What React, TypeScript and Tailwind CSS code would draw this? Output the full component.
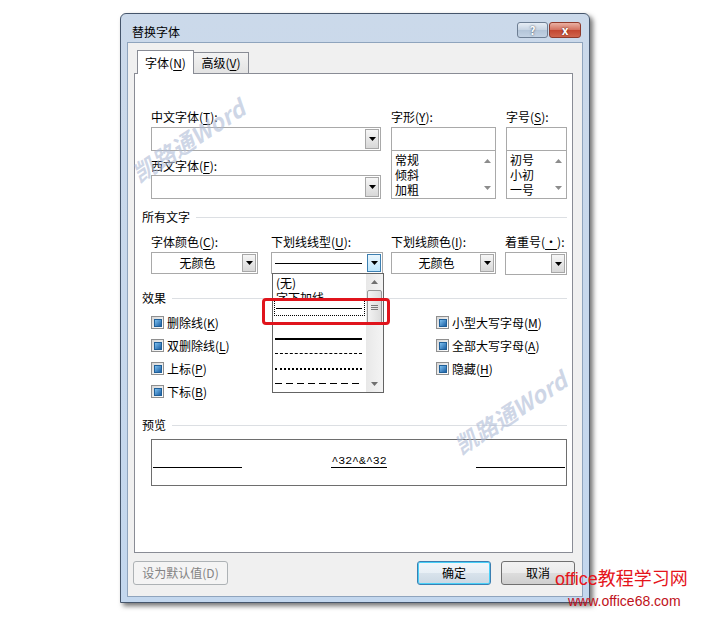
import type { ReactNode } from "react";
import clsx from "clsx";

const Caret = ({ up, className }: { up?: boolean; className?: string }) => (
  <svg width="7" height="4" viewBox="0 0 7 4" className={className}>
    <path d={up ? "M0 4h7L3.5 0z" : "M0 0h7L3.5 4z"} fill="currentColor" />
  </svg>
);

const Acc = ({ text, k, tail = "" }: { text: string; k: string; tail?: string }) => (
  <span>
    {text}(<span className="underline decoration-1 underline-offset-2">{k}</span>){tail}
  </span>
);

type ComboProps = { className?: string; children?: ReactNode; active?: boolean };

const Combo = ({ className, children, active }: ComboProps) => (
  <div className={clsx("flex border border-[#a9a9a9] bg-white p-[1px]", className)}>
    <div className="flex min-w-0 flex-1 items-center">{children}</div>
    <div
      className={clsx(
        "flex w-[14px] items-center justify-center border",
        active
          ? "border-[#3c7fb1] bg-[linear-gradient(#eaf6fd,#bee6fd)]"
          : "border-[#a7a7a7] bg-[linear-gradient(#f6f6f6,#d8d8d8)]",
      )}
    >
      <Caret className="text-black" />
    </div>
  </div>
);

const ListBox = ({ items }: { items: string[] }) => (
  <div className="flex h-[48px] border border-t-0 border-[#a9a9a9] bg-white">
    <div className="flex-1 pl-[3px] pt-[1px] leading-[15px]">
      {items.map((i) => (
        <div key={i}>{i}</div>
      ))}
    </div>
    <div className="flex w-[16px] flex-col items-center justify-between py-[8px] text-[#8c8c8c]">
      <Caret up />
      <Caret />
    </div>
  </div>
);

const Section = ({ title, className }: { title: string; className?: string }) => (
  <div className={clsx("flex h-[16px] items-center gap-[6px]", className)}>
    <span>{title}</span>
    <div className="h-px flex-1 bg-[#dcdfe3]" />
  </div>
);

const Check = ({ children }: { children: ReactNode }) => (
  <div className="flex h-[23px] items-center">
    <div className="flex h-[13px] w-[13px] items-center justify-center border border-[#8f8f8f] bg-[linear-gradient(135deg,#d6d6d6,#ffffff)]">
      <div className="h-[8px] w-[8px] border border-[#1f5f98] bg-[linear-gradient(135deg,#7cc0f0,#1c5fa3)]" />
    </div>
    <span className="ml-[3px]">{children}</span>
  </div>
);

const Button = ({ children, className, primary, disabled }: { children: ReactNode; className?: string; primary?: boolean; disabled?: boolean }) => (
  <div
    className={clsx(
      "flex h-[24px] items-center justify-center rounded-[3px] border",
      disabled
        ? "border-[#adb2b5] bg-[#f4f4f4] text-[#838383]"
        : primary
          ? "border-[#3c7fb1] bg-[linear-gradient(#f2f7fb,#e8eff5_50%,#d9e3ec_50%,#cbd8e3)] shadow-[inset_0_0_0_1px_#48d0f8]"
          : "border-[#707070] bg-[linear-gradient(#f2f2f2,#ebebeb_50%,#dddddd_50%,#cfcfcf)]",
      className,
    )}
  >
    {children}
  </div>
);

const LineItem = ({ line }: { line: string }) => (
  <div className="flex h-[15px] items-center pl-[2px]">
    <div className={clsx("w-[87px]", line)} />
  </div>
);

const Watermark = ({ className }: { className: string }) => (
  <div
    className={clsx(
      "pointer-events-none absolute -translate-x-1/2 -translate-y-1/2 -rotate-[33deg] whitespace-nowrap text-[23px] font-bold italic text-[#aebbd6]/60",
      className,
    )}
  >
    凯路通Word
  </div>
);

export default function App() {
  return (
    <div className="relative h-[617px] w-[710px] overflow-hidden bg-white font-['Noto_Sans_CJK_SC',sans-serif] text-[12px] leading-[16px] text-black">
      <div className="ml-[120px] pt-[13px]">
        {/* window */}
        <div className="flex h-[590px] w-[470px] flex-col rounded-t-[6px] border border-[#45556b] bg-[linear-gradient(180deg,#cbd9ea,#c3d7ee)] shadow-[3px_3px_5px_rgba(0,0,0,0.55)]">
          {/* title bar */}
          <div className="flex h-[28px] items-start pl-[11px] pr-[8px]">
            <span className="mt-[10px]">替换字体</span>
            <div className="ml-auto mt-[8px] flex gap-[1px]">
              <div className="flex h-[16px] w-[31px] items-center justify-center rounded-[3px] border border-[#6d7e93] bg-[linear-gradient(#e6edf5,#c6d3e2_50%,#b2c4d8_50%,#c3d2e3)] text-[11px] font-bold leading-none text-white [text-shadow:0_0_2px_#243447]">
                ?
              </div>
              <div className="flex h-[16px] w-[32px] items-center justify-center rounded-[3px] border border-[#8e3a2c] bg-[linear-gradient(#eab0a2,#d2705e_50%,#c3452f_50%,#d0654c)] text-[12px] font-bold leading-none text-white [text-shadow:0_0_2px_#4a1208]">
                x
              </div>
            </div>
          </div>

          {/* client area */}
          <div className="ml-[6px] flex h-[555px] w-[456px] flex-col border border-[#8fa4bd] bg-[#f0f0f0]">
            {/* tabs */}
            <div className="ml-[9px] mt-[7px] flex h-[23px] items-end">
              <div className="relative z-10 mb-[-1px] flex h-[24px] w-[57px] items-center justify-center border border-b-0 border-[#898c95] bg-white">
                <Acc text="字体" k="N" />
              </div>
              <div className="ml-[-1px] flex h-[21px] w-[56px] items-center justify-center border border-b-0 border-[#898c95] bg-[linear-gradient(#f3f3f3,#e3e3e3)]">
                <Acc text="高级" k="V" />
              </div>
            </div>

            {/* tab panel */}
            <div className="ml-[6px] flex h-[480px] w-[439px] flex-col border border-[#898c95] bg-white pl-[7px] pr-[5px]">
              {/* font pickers */}
              <div className="ml-[9px] mt-[35px] flex">
                <div className="flex w-[230px] flex-col">
                  <Acc text="中文字体" k="T" tail=":" />
                  <Combo className="mt-[2px] h-[24px]" />
                  <div className="mt-[7px]">
                    <Acc text="西文字体" k="F" tail=":" />
                  </div>
                  <Combo className="mt-[1px] h-[24px]" />
                </div>
                <div className="ml-[10px] flex w-[105px] flex-col">
                  <Acc text="字形" k="Y" tail=":" />
                  <div className="mt-[2px] h-[24px] border border-[#a9a9a9] bg-white" />
                  <ListBox items={["常规", "倾斜", "加粗"]} />
                </div>
                <div className="ml-[10px] flex w-[61px] flex-col">
                  <Acc text="字号" k="S" tail=":" />
                  <div className="mt-[2px] h-[24px] border border-[#a9a9a9] bg-white" />
                  <ListBox items={["初号", "小初", "一号"]} />
                </div>
              </div>

              <Section title="所有文字" className="mt-[10px]" />

              <div className="ml-[9px] mt-[9px] flex">
                <div className="flex w-[107px] flex-col">
                  <Acc text="字体颜色" k="C" tail=":" />
                  <Combo className="mt-[2px] h-[22px]">
                    <span className="w-full text-center">无颜色</span>
                  </Combo>
                </div>
                <div className="ml-[13px] flex w-[112px] flex-col">
                  <Acc text="下划线线型" k="U" tail=":" />
                  <Combo className="mt-[2px] h-[22px]" active>
                    <div className="ml-[2px] h-px w-[87px] bg-black" />
                  </Combo>
                </div>
                <div className="ml-[8px] flex w-[105px] flex-col">
                  <Acc text="下划线颜色" k="I" tail=":" />
                  <Combo className="mt-[2px] h-[22px]">
                    <span className="w-full text-center">无颜色</span>
                  </Combo>
                </div>
                <div className="ml-[9px] flex w-[62px] flex-col">
                  <Acc text="着重号" k="·" tail=":" />
                  <Combo className="mt-[2px] h-[23px]" />
                </div>
              </div>

              <Section title="效果" className="mt-[15px]" />

              <div className="ml-[9px] mt-[5px] flex">
                <div className="flex w-[285px] flex-col">
                  <Check><Acc text="删除线" k="K" /></Check>
                  <Check><Acc text="双删除线" k="L" /></Check>
                  <Check><Acc text="上标" k="P" /></Check>
                  <Check><Acc text="下标" k="B" /></Check>
                </div>
                <div className="flex flex-col">
                  <Check><Acc text="小型大写字母" k="M" /></Check>
                  <Check><Acc text="全部大写字母" k="A" /></Check>
                  <Check><Acc text="隐藏" k="H" /></Check>
                </div>
              </div>

              <Section title="预览" className="mt-[14px]" />

              <div className="ml-[9px] mt-[6px] flex h-[47px] justify-between border border-[#6e6e6e] px-[1px]">
                <div className="mt-[27px] h-px w-[89px] bg-black" />
                <span className="mt-[14px] h-[14px] border-b border-black font-['Liberation_Mono',monospace] text-[11.5px] leading-[13px]">
                  ^32^&amp;^32
                </span>
                <div className="mt-[27px] h-px w-[89px] bg-black" />
              </div>
            </div>

            {/* buttons */}
            <div className="mt-[8px] flex pl-[5px] pr-[7px]">
              <Button disabled className="w-[95px]">设为默认值(D)</Button>
              <Button primary className="ml-auto w-[74px]">确定</Button>
              <Button className="ml-[10px] w-[74px]">取消</Button>
            </div>
          </div>
        </div>
      </div>

      {/* open dropdown list of 下划线线型 */}
      <div className="absolute left-[272px] top-[273px] flex h-[120px] w-[112px] border border-[#646464] bg-white">
        <div className="flex w-[93px] flex-col">
          <div className="h-[16px] pl-[3px] pt-[1px] leading-[15px]">(无)</div>
          <div className="h-[10px] overflow-hidden pl-[3px] leading-[15px]">字下加线</div>
          <div className="mx-[1px] flex h-[16px] items-center border border-dotted border-black pl-[1px]">
            <div className="h-px w-[86px] bg-black" />
          </div>
          <LineItem line="h-[2px] bg-black" />
          <LineItem line="h-[2px] bg-black" />
          <LineItem line="border-t border-dashed border-black" />
          <LineItem line="border-t-2 border-dotted border-black" />
          <LineItem line="h-px bg-[repeating-linear-gradient(90deg,#000_0_7px,transparent_7px_11px)]" />
        </div>
        <div className="flex w-[17px] flex-col items-center bg-[linear-gradient(90deg,#e8e8e8,#f4f4f4)] text-[#707070]">
          <div className="flex h-[16px] items-center">
            <Caret up />
          </div>
          <div className="flex h-[34px] w-[15px] items-center justify-center rounded-[2px] border border-[#979797] bg-[linear-gradient(90deg,#f3f3f3,#dcdcdc)]">
            <div className="flex flex-col gap-[1px]">
              <div className="h-px w-[7px] bg-[#7a7a7a]" />
              <div className="h-px w-[7px] bg-[#7a7a7a]" />
              <div className="h-px w-[7px] bg-[#7a7a7a]" />
            </div>
          </div>
          <div className="mt-auto flex h-[16px] items-center">
            <Caret />
          </div>
        </div>
      </div>

      {/* red highlight box */}
      <div className="absolute left-[262px] top-[298px] h-[27px] w-[128px] rounded-[4px] border-[3px] border-[#e0141c]" />

      <Watermark className="left-[188px] top-[140px]" />
      <Watermark className="left-[510px] top-[412px]" />

      {/* site marks */}
      <div className="absolute left-[555px] top-[568px] whitespace-nowrap font-['Liberation_Sans','Noto_Sans_CJK_SC',sans-serif] text-[18px] leading-[22px] text-[#e5141b]">
        office教程学习网
      </div>
      <div className="absolute left-[568px] top-[593px] whitespace-nowrap font-['Liberation_Sans',sans-serif] text-[14px] leading-[16px] text-[#c0111a]">
        www.office68.com
      </div>
    </div>
  );
}
